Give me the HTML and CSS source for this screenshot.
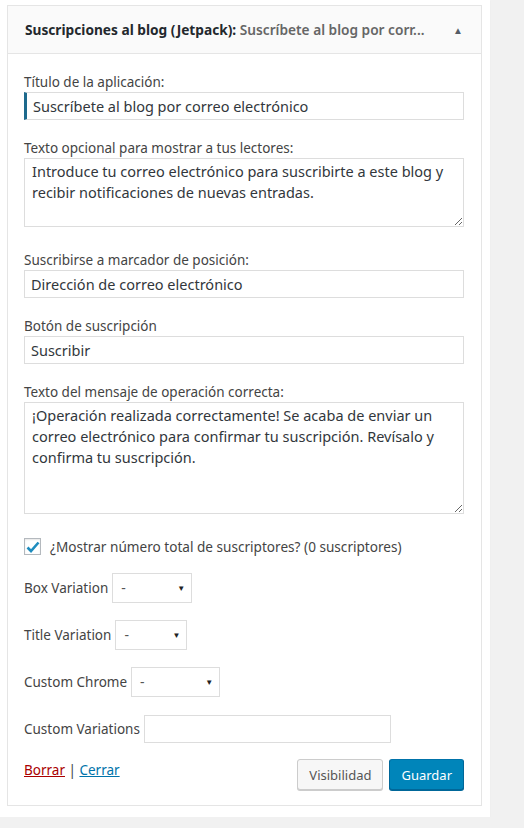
FILE: index.html
```html
<!DOCTYPE html>
<html lang="es">
<head>
    <meta charset="UTF-8">
    <title>Suscripciones al blog</title>
    <link rel="stylesheet" href="styles.css">
</head>
<body>
    <div class="panel">
        <div class="widget">
            <!-- Widget header -->
            <div class="widget-top">
                <div class="widget-title">
                    <strong>Suscripciones al blog (Jetpack):</strong>
                    <span class="in-title">Suscríbete al blog por corr...</span>
                </div>
                <span class="toggle">&#9650;</span>
            </div>

            <div class="widget-inside">
                <div class="field">
                    <label>Título de la aplicación:</label>
                    <input type="text" class="text-input focused" value="Suscríbete al blog por correo electrónico">
                </div>

                <div class="field has-area">
                    <label>Texto opcional para mostrar a tus lectores:</label>
                    <textarea class="area short">Introduce tu correo electrónico para suscribirte a este blog y recibir notificaciones de nuevas entradas.</textarea>
                </div>

                <div class="field">
                    <label>Suscribirse a marcador de posición:</label>
                    <input type="text" class="text-input" value="Dirección de correo electrónico">
                </div>

                <div class="field">
                    <label>Botón de suscripción</label>
                    <input type="text" class="text-input" value="Suscribir">
                </div>

                <div class="field">
                    <label>Texto del mensaje de operación correcta:</label>
                    <textarea class="area tall">¡Operación realizada correctamente! Se acaba de enviar un correo electrónico para confirmar tu suscripción. Revísalo y confirma tu suscripción.</textarea>
                </div>

                <div class="check-row">
                    <span class="checkbox">
                        <svg width="14" height="12" viewBox="0 0 14 12"><path d="M1.5 6.5 L5 10 L12.5 1.5" fill="none" stroke="#1e8cbe" stroke-width="2.6"/></svg>
                    </span>
                    <span>¿Mostrar número total de suscriptores? (0 suscriptores)</span>
                </div>

                <div class="inline-row">
                    <span>Box Variation</span>
                    <span class="select w-box">-<span class="arrow">&#9660;</span></span>
                </div>
                <div class="inline-row">
                    <span>Title Variation</span>
                    <span class="select w-title">-<span class="arrow">&#9660;</span></span>
                </div>
                <div class="inline-row">
                    <span>Custom Chrome</span>
                    <span class="select w-chrome">-<span class="arrow">&#9660;</span></span>
                </div>
                <div class="inline-row">
                    <span>Custom Variations</span>
                    <input type="text" class="text-input variations">
                </div>

                <div class="widget-control">
                    <div class="links">
                        <a href="#" class="delete">Borrar</a> | <a href="#" class="close">Cerrar</a>
                    </div>
                    <div class="actions">
                        <button class="button">Visibilidad</button>
                        <button class="button primary">Guardar</button>
                    </div>
                </div>
            </div>
        </div>
    </div>
</body>
</html>
```

FILE: styles.css
```css
body {
    margin: 0;
    background-color: #f1f1f1;
    font-family: "Noto Sans", "Open Sans", sans-serif;
    font-size: 13.5px;
    color: #444;
}

.panel {
    width: 475px;
    background-color: #fff;
    padding: 5px 8px 11px 7px;
    box-shadow: 0 1px 1px rgba(0, 0, 0, 0.06);
}

.widget {
    border: 1px solid #e5e5e5;
    background-color: #fff;
}

/* Header */
.widget-top {
    display: flex;
    align-items: center;
    justify-content: space-between;
    height: 47px;
    padding: 0 18px 0 17px;
    background-color: #fafafa;
    border-bottom: 1px solid #e5e5e5;
}

.widget-title {
    font-size: 13.7px;
    white-space: nowrap;
}

.widget-title strong {
    color: #23282d;
}

.in-title {
    color: #666;
    font-weight: 600;
}

.toggle {
    font-size: 10px;
    color: #555d66;
}

/* Body */
.widget-inside {
    padding: 19px 17px 15px 16px;
}

.field {
    margin-bottom: 19px;
}

.field.has-area {
    margin-bottom: 24px;
}

.field label {
    display: block;
    line-height: 18px;
    margin-bottom: 1px;
}

.text-input,
.area {
    box-sizing: border-box;
    width: 100%;
    border: 1px solid #ddd;
    font-family: inherit;
    font-size: 14.5px;
    color: #32373c;
    background-color: #fff;
    margin: 0;
    outline: none;
}

.text-input {
    height: 28px;
    padding: 0 6px;
}

.text-input.focused {
    border-left: 3px solid #1e6a8d;
    padding-left: 6px;
}

.area {
    display: block;
    padding: 2px 7px;
    line-height: 21px;
    resize: vertical;
}

.area.short {
    height: 69px;
}

.area.tall {
    height: 112px;
}

/* Checkbox */
.check-row {
    display: flex;
    align-items: center;
    gap: 9px;
    margin-top: 23px;
    font-size: 13.6px;
}

.checkbox {
    box-sizing: border-box;
    width: 17px;
    height: 17px;
    border: 1px solid #b4b9be;
    display: flex;
    justify-content: center;
    align-items: center;
    box-shadow: inset 0 1px 2px rgba(0, 0, 0, 0.1);
}

/* Inline selects */
.inline-row {
    display: flex;
    align-items: center;
    gap: 4px;
    height: 30px;
    margin-top: 17px;
}

.select {
    position: relative;
    box-sizing: border-box;
    height: 30px;
    border: 1px solid #ddd;
    padding: 0 8px;
    line-height: 28px;
    color: #555;
    font-size: 14px;
}

.select .arrow {
    position: absolute;
    right: 6px;
    top: 0;
    font-size: 8px;
    color: #222;
}

.w-box { width: 80px; }
.w-title { width: 72px; }
.w-chrome { width: 89px; }

.text-input.variations {
    width: 247px;
}

/* Footer controls */
.widget-control {
    display: flex;
    justify-content: space-between;
    align-items: flex-start;
    margin-top: 15px;
}

.links {
    padding-top: 2px;
    color: #444;
}

.links a {
    text-decoration: underline;
}

.delete {
    color: #a00;
}

.close {
    color: #0073aa;
}

.actions {
    display: flex;
    gap: 6px;
}

.button {
    height: 31px;
    padding: 0 11px;
    font-family: inherit;
    font-size: 13px;
    color: #555;
    background-color: #f7f7f7;
    border: 1px solid #ccc;
    border-radius: 3px;
    box-shadow: 0 1px 0 #ccc;
    cursor: pointer;
}

.button.primary {
    color: #fff;
    background-color: #0085ba;
    border-color: #0073aa #006799 #006799;
    box-shadow: 0 1px 0 #006799;
}
```
